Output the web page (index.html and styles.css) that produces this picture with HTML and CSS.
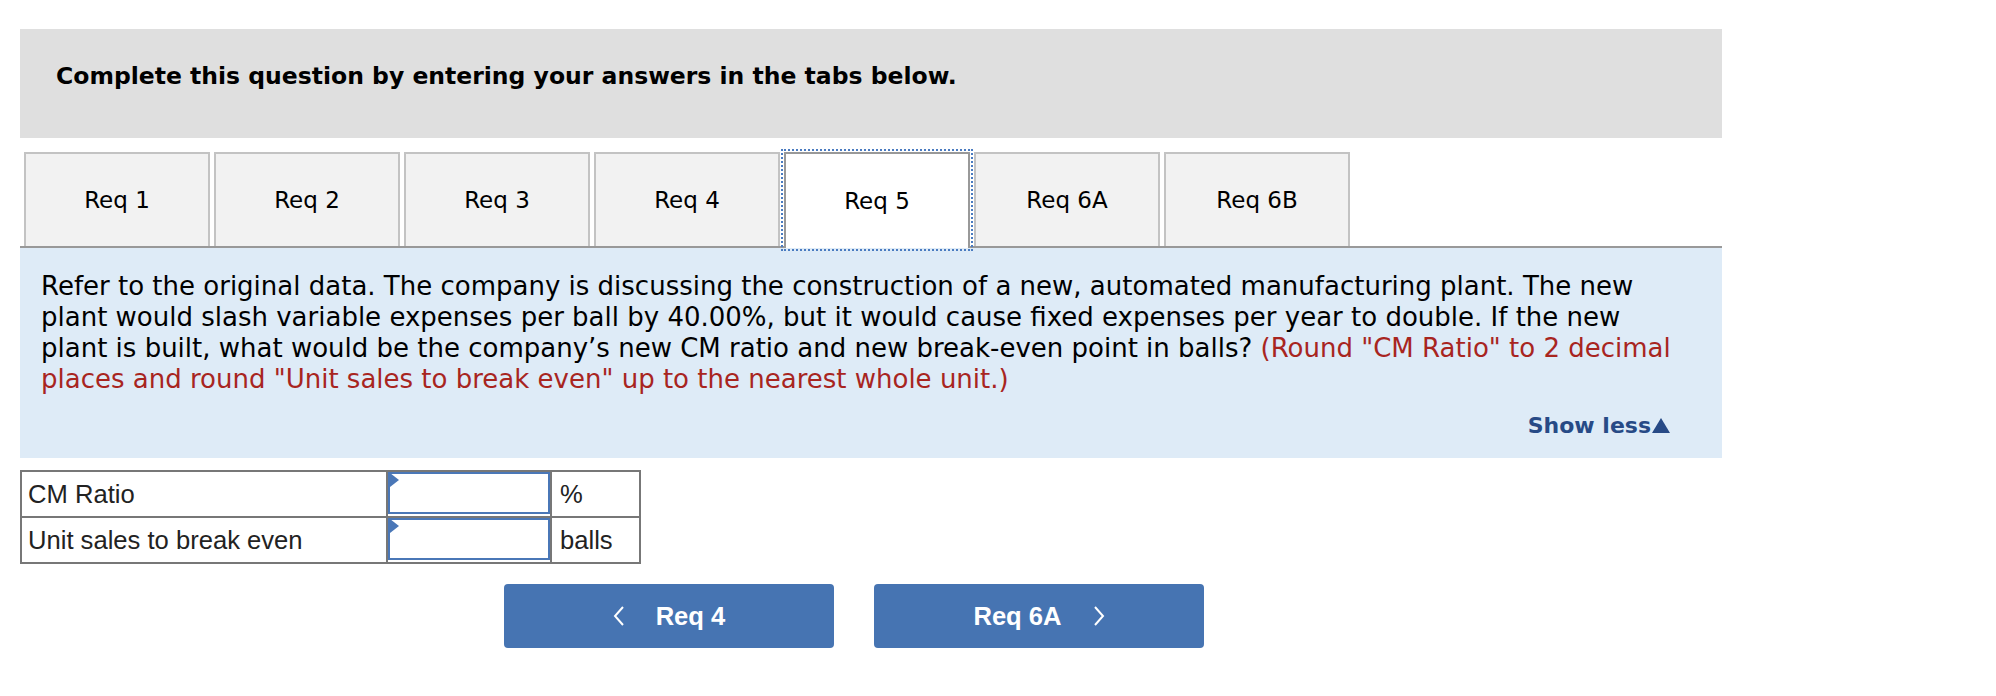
FILE: index.html
```html
<!DOCTYPE html>
<html lang="en">
<head>
<meta charset="utf-8">
<title>Req 5</title>
<link rel="stylesheet" href="styles.css">
</head>
<body>
<div class="page">
  <div class="header">Complete this question by entering your answers in the tabs below.</div>

  <div class="tabs">
    <div class="tab">Req 1</div>
    <div class="tab">Req 2</div>
    <div class="tab">Req 3</div>
    <div class="tab">Req 4</div>
    <div class="tab tab-active">Req 5</div>
    <div class="tab">Req 6A</div>
    <div class="tab">Req 6B</div>
  </div>

  <div class="info">
    <p class="question">Refer to the original data. The company is discussing the construction of a new, automated manufacturing plant. The new plant would slash variable expenses per ball by 40.00%, but it would cause fixed expenses per year to double. If the new plant is built, what would be the company’s new CM ratio and new break-even point in balls? <span class="hint">(Round "CM Ratio" to 2 decimal places and round "Unit sales to break even" up to the nearest whole unit.)</span></p>
    <div class="show-row"><span class="show-less">Show less<svg class="tri" width="18" height="15" viewBox="0 0 18 15"><polygon points="9,0 18,15 0,15" fill="#274a86"/></svg></span></div>
  </div>

  <div class="answer-grid">
    <div class="cell label">CM Ratio</div>
    <div class="cell input-cell"><div class="input"></div><span class="flag"></span></div>
    <div class="cell unit">%</div>
    <div class="cell label">Unit sales to break even</div>
    <div class="cell input-cell"><div class="input"></div><span class="flag"></span></div>
    <div class="cell unit">balls</div>
  </div>

  <div class="nav">
    <div class="btn">
      <svg class="chev" width="12" height="20" viewBox="0 0 12 20"><polyline points="10,1 2,10 10,19" fill="none" stroke="#fff" stroke-width="2"/></svg>
      <span>Req 4</span>
    </div>
    <div class="btn">
      <span>Req 6A</span>
      <svg class="chev" width="12" height="20" viewBox="0 0 12 20"><polyline points="2,1 10,10 2,19" fill="none" stroke="#fff" stroke-width="2"/></svg>
    </div>
  </div>
</div>
</body>
</html>
```

FILE: styles.css
```css
* { box-sizing: border-box; }

body {
  margin: 0;
  background: #fff;
  font-family: "DejaVu Sans", Verdana, sans-serif;
  color: #000;
}

.page {
  margin: 29px 0 0 20px;
  width: 1702px;
}

.header {
  height: 109px;
  background: #dfdfdf;
  padding: 33px 0 0 36px;
  font-weight: bold;
  font-size: 23.5px;
  line-height: 28px;
}

.tabs {
  margin-top: 14px;
  display: flex;
  gap: 4px;
  padding-left: 4px;
  border-bottom: 2px solid #999;
  height: 96px;
}

.tab {
  width: 186px;
  height: 94px;
  background: #f2f2f2;
  border: 2px solid #c3c3c3;
  border-bottom: none;
  display: flex;
  align-items: center;
  justify-content: center;
  font-size: 23px;
  color: #000;
}

.tab-active {
  background: #fff;
  border-color: #999;
  height: 96px;
  position: relative;
  z-index: 1;
  outline: 2px dotted #4a7bc0;
  outline-offset: 1px;
}

.info {
  background: #deebf7;
  padding: 23px 36px 19px 21px;
}

.question {
  margin: 0;
  font-size: 26px;
  line-height: 31px;
}

.hint { color: #a8251f; }

.show-row {
  margin-top: 18px;
  display: flex;
  justify-content: flex-end;
  padding-right: 16px;
}

.show-less {
  font-weight: bold;
  font-size: 22px;
  line-height: 26px;
  color: #274a86;
  display: flex;
  align-items: center;
}

.tri { margin-left: 1px; margin-top: -2px; }

.answer-grid {
  margin-top: 12px;
  display: grid;
  grid-template-columns: 364px 162px 87px;
  grid-template-rows: 44px 44px;
  gap: 2px;
  width: 621px;
  background: #777;
  border: 2px solid #777;
  font-family: "Liberation Sans", Arial, sans-serif;
  font-size: 25.6px;
  color: #222;
}

.cell {
  background: #fff;
  display: flex;
  align-items: center;
}

.label { padding-left: 6px; }
.unit { padding-left: 8px; }

.input-cell {
  position: relative;
  padding-bottom: 1px;
}

.input {
  width: 100%;
  height: 42px;
  border: 2px solid #4a77b7;
  align-self: flex-start;
}

.flag {
  position: absolute;
  left: 2px;
  top: 1px;
  width: 0;
  height: 0;
  border-top: 7px solid transparent;
  border-bottom: 7px solid transparent;
  border-left: 9px solid #4a77b7;
}

.nav {
  margin: 20px 0 0 484px;
  display: flex;
  gap: 40px;
}

.btn {
  width: 330px;
  height: 64px;
  background: #4674b2;
  border-radius: 4px;
  display: flex;
  align-items: center;
  justify-content: center;
  gap: 31px;
  color: #fff;
  font-family: "Liberation Sans", Arial, sans-serif;
  font-weight: bold;
  font-size: 25.6px;
}
```
